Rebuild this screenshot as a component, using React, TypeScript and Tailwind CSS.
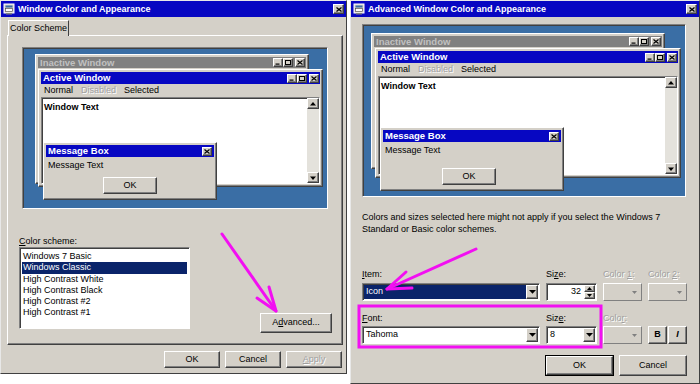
import React from 'react'

const raised = 'border border-t-white border-l-white border-b-[#404040] border-r-[#404040] shadow-[inset_-1px_-1px_#808080]'
const sunken = 'border border-t-[#808080] border-l-[#808080] border-b-white border-r-white shadow-[inset_1px_1px_#404040]'
const face = 'bg-[#d4d0c8]'
const titleBlue = 'bg-[#0707c2]'

function CapBtn({ kind }: { kind: 'min' | 'max' | 'close' }) {
  return (
    <div className={`w-[10px] h-[9px] ${face} ${raised} flex items-center justify-center`}>
      <svg width="6" height="5" viewBox="0 0 6 5">
        {kind === 'min' && <rect x="0.5" y="3.5" width="4" height="1.2" fill="#000" />}
        {kind === 'max' && <rect x="0.5" y="0.5" width="5" height="4" fill="none" stroke="#000" strokeWidth="1" />}
        {kind === 'close' && <path d="M0.5 0.5 L5.5 4.5 M5.5 0.5 L0.5 4.5" stroke="#000" strokeWidth="1.2" />}
      </svg>
    </div>
  )
}

function AppIcon() {
  return (
    <svg width="12" height="12" viewBox="0 0 12 12" className="shrink-0">
      <rect x="1" y="1" width="10" height="9" fill="#d4d0c8" stroke="#fff" />
      <rect x="2.5" y="2.5" width="7" height="2" fill="#3a6ea5" />
      <rect x="2.5" y="5.5" width="7" height="3" fill="#fff" stroke="#404040" strokeWidth="0.6" />
      <rect x="3" y="10" width="6" height="1.5" fill="#808080" />
    </svg>
  )
}

function TitleBar({ title }: { title: string }) {
  return (
    <div className={`h-[16px] ${titleBlue} flex items-center pl-[2px] pr-[2px] gap-[3px]`}>
      <AppIcon />
      <span className="text-white font-bold text-[9px] leading-none flex-1">{title}</span>
      <div className={`w-[11px] h-[10px] ${face} ${raised} flex items-center justify-center`}>
        <svg width="6" height="5" viewBox="0 0 6 5">
          <path d="M0.5 0.5 L5.5 4.5 M5.5 0.5 L0.5 4.5" stroke="#000" strokeWidth="1.3" />
        </svg>
      </div>
    </div>
  )
}

function Btn({ label, u, w, h, def, disabled }: { label: string; u?: number; w: number; h: number; def?: boolean; disabled?: boolean }) {
  const text = u === undefined ? label : (
    <>
      {label.slice(0, u)}
      <span className="underline">{label[u]}</span>
      {label.slice(u + 1)}
    </>
  )
  return (
    <div style={{ width: w, height: h }} className={`${def ? 'border border-black' : ''} ${face} shrink-0`}>
      <div className={`w-full h-full ${raised} flex items-center justify-center text-[9px] ${disabled ? 'text-[#a0a0a0] [text-shadow:1px_1px_#fff]' : 'text-black'}`}>
        {text}
      </div>
    </div>
  )
}

type PreviewProps = {
  w: number
  h: number
  inactive: { l: number; t: number; w: number; h: number }
  active: { l: number; t: number; w: number; h: number }
  msg: { l: number; t: number; w: number; h: number; okL: number; okT: number }
}

function Preview({ w, h, inactive, active, msg }: PreviewProps) {
  return (
    <div style={{ width: w, height: h }} className={`${sunken} bg-[#3a6ea5] relative shrink-0`}>
      {/* inactive window */}
      <div style={{ left: inactive.l, top: inactive.t, width: inactive.w, height: inactive.h }} className={`absolute ${face} ${raised} p-[2px]`}>
        <div className="h-[11px] bg-[#808080] flex items-center pl-[2px] pr-[1px]">
          <span className="flex-1 text-[9.5px] font-bold text-[#c0c0c0] leading-none">Inactive Window</span>
          <CapBtn kind="min" />
          <CapBtn kind="max" />
          <div className="w-[2px]" />
          <CapBtn kind="close" />
        </div>
      </div>
      {/* active window */}
      <div style={{ left: active.l, top: active.t, width: active.w, height: active.h }} className={`absolute ${face} ${raised} p-[2px] flex flex-col`}>
        <div className={`h-[12px] ${titleBlue} flex items-center pl-[2px] pr-[1px] shrink-0`}>
          <span className="flex-1 text-[9.5px] font-bold text-white leading-none">Active Window</span>
          <CapBtn kind="min" />
          <CapBtn kind="max" />
          <div className="w-[2px]" />
          <CapBtn kind="close" />
        </div>
        <div className="h-[13px] flex items-center gap-[8px] pl-[3px] text-[9px] shrink-0">
          <span>Normal</span>
          <span className="text-[#a0a0a0] [text-shadow:1px_1px_#fff]">Disabled</span>
          <span>Selected</span>
        </div>
        <div className={`flex-1 ${sunken} bg-white flex`}>
          <div className="flex-1 px-[2px] pt-[5px] text-[9px] font-bold leading-none">Window Text</div>
          <div className="w-[12px] bg-[#e4e2dc] flex flex-col justify-between">
            <div className={`h-[11px] ${face} ${raised} flex items-center justify-center`}>
              <svg width="6" height="4" viewBox="0 0 6 4"><path d="M3 0 L6 3.5 L0 3.5 Z" fill="#000" /></svg>
            </div>
            <div className={`h-[11px] ${face} ${raised} flex items-center justify-center`}>
              <svg width="6" height="4" viewBox="0 0 6 4"><path d="M0 0.5 L6 0.5 L3 4 Z" fill="#000" /></svg>
            </div>
          </div>
        </div>
      </div>
      {/* message box */}
      <div style={{ left: msg.l, top: msg.t, width: msg.w, height: msg.h }} className={`absolute ${face} ${raised} p-[2px]`}>
        <div className={`h-[12px] ${titleBlue} flex items-center pl-[2px] pr-[2px]`}>
          <span className="flex-1 text-[9.5px] font-bold text-white leading-none">Message Box</span>
          <CapBtn kind="close" />
        </div>
        <div className="pl-[2px] pt-[4px] text-[9px] leading-none">Message Text</div>
        <div className="absolute" style={{ left: msg.okL, top: msg.okT }}>
          <Btn label="OK" w={54} h={17} />
        </div>
      </div>
    </div>
  )
}

function Label({ text, u, gray }: { text: string; u?: number; gray?: boolean }) {
  return (
    <div className={`h-[12px] text-[9px] leading-[12px] ${gray ? 'text-[#a0a0a0] [text-shadow:1px_1px_#fff]' : 'text-black'}`}>
      {u === undefined ? text : (
        <>
          {text.slice(0, u)}
          <span className="underline">{text[u]}</span>
          {text.slice(u + 1)}
        </>
      )}
    </div>
  )
}

function DropArrow({ gray }: { gray?: boolean }) {
  return (
    <div className={`w-[12px] h-full ${face} ${raised} flex items-center justify-center shrink-0`}>
      <svg width="7" height="4" viewBox="0 0 7 4"><path d="M0 0 L7 0 L3.5 3.8 Z" fill={gray ? '#808080' : '#000'} /></svg>
    </div>
  )
}

function Combo({ w, value, selected }: { w: number; value: string; selected?: boolean }) {
  return (
    <div style={{ width: w }} className={`h-[18px] ${sunken} bg-white flex p-[1px] shrink-0`}>
      <div className={`flex-1 flex items-center pl-[2px] text-[9px] ${selected ? 'bg-[#0a246a] text-white' : 'text-black'}`}>{value}</div>
      <DropArrow />
    </div>
  )
}

function GrayCombo() {
  return (
    <div className={`w-[39px] h-[18px] ${face} border border-t-white border-l-white border-b-[#808080] border-r-[#808080] flex items-center justify-end pr-[4px]`}>
      <svg width="5" height="3" viewBox="0 0 5 3"><path d="M0 0 L5 0 L2.5 3 Z" fill="#808080" /></svg>
    </div>
  )
}

export default function App() {
  const schemes = ['Windows 7 Basic', 'Windows Classic', 'High Contrast White', 'High Contrast Black', 'High Contrast #2', 'High Contrast #1']

  return (
    <div className="relative w-[700px] h-[384px] bg-white flex gap-[3px] font-['Liberation_Sans',Arial,sans-serif] text-black overflow-hidden">
      {/* Left dialog */}
      <div className={`w-[347px] h-[374px] ${face} border border-t-[#e8e8e8] border-l-[#e8e8e8] border-b-[#404040] border-r-[#404040] flex flex-col shrink-0`}>
        <TitleBar title="Window Color and Appearance" />
        <div className="pl-[7px] pt-[3px] flex">
          <div className={`h-[16px] w-[61px] border-t border-l border-t-white border-l-white border-r border-r-[#404040] ${face} text-[9px] flex items-center justify-center relative z-10 -mb-[1px]`}>
            Color Scheme
          </div>
        </div>
        <div className={`ml-[6px] w-[336px] h-[310px] ${raised} px-[14px] pt-[11px] flex flex-col`}>
          <Preview
            w={306}
            h={162}
            inactive={{ l: 12, t: 6, w: 274, h: 130 }}
            active={{ l: 15, t: 21, w: 285, h: 118 }}
            msg={{ l: 20, t: 94, w: 174, h: 58, okL: 59, okT: 34 }}
          />
          <div className="mt-[26px] flex justify-between items-end">
            <div className="-ml-[3px] flex flex-col">
              <Label text="Color scheme:" u={0} />
              <div className={`w-[171px] h-[82px] ${sunken} bg-white p-[2px] pt-[3px]`}>
                {schemes.map((s, i) => (
                  <div key={s} className={`h-[11.3px] leading-[11.3px] text-[9px] pl-[1px] ${i === 1 ? 'bg-[#0a246a] text-white' : ''}`}>{s}</div>
                ))}
              </div>
            </div>
            <div className="mb-[-4px] mr-[-4px]">
              <Btn label="Advanced..." u={1} w={72} h={20} />
            </div>
          </div>
        </div>
        <div className="mt-[6px] pr-[4px] flex justify-end gap-[5px]">
          <Btn label="OK" w={56} h={17} />
          <Btn label="Cancel" w={56} h={17} />
          <Btn label="Apply" u={0} w={56} h={17} disabled />
        </div>
      </div>

      {/* Right dialog */}
      <div className={`w-[350px] h-[384px] ${face} border border-t-[#e8e8e8] border-l-[#e8e8e8] border-b-[#404040] border-r-[#404040] flex flex-col shrink-0`}>
        <TitleBar title="Advanced Window Color and Appearance" />
        <div className="pl-[11px] pt-[7px]">
          <Preview
            w={324}
            h={173}
            inactive={{ l: 8, t: 8, w: 294, h: 136 }}
            active={{ l: 12, t: 23, w: 306, h: 130 }}
            msg={{ l: 17, t: 102, w: 184, h: 64, okL: 61, okT: 40 }}
          />
        </div>
        <div className="pl-[11px] pt-[14px] text-[9px] leading-[12px] w-[330px]">
          Colors and sizes selected here might not apply if you select the Windows 7 Standard or Basic color schemes.
        </div>
        <div className="pl-[11px] pt-[33px] flex flex-col">
          <div className="flex gap-[6px]">
            <div className="w-[178px] flex flex-col gap-[3px]">
              <Label text="Item:" u={0} />
              <Combo w={178} value="Icon" selected />
            </div>
            <div className="w-[51px] flex flex-col gap-[3px]">
              <Label text="Size:" u={2} />
              <div className={`h-[18px] w-[51px] ${sunken} bg-white flex p-[1px]`}>
                <div className="flex-1 text-[9px] flex items-center justify-end pr-[3px]">32</div>
                <div className="w-[11px] flex flex-col">
                  <div className={`flex-1 ${face} ${raised} flex items-center justify-center`}>
                    <svg width="5" height="3" viewBox="0 0 5 3"><path d="M2.5 0 L5 3 L0 3 Z" fill="#000" /></svg>
                  </div>
                  <div className={`flex-1 ${face} ${raised} flex items-center justify-center`}>
                    <svg width="5" height="3" viewBox="0 0 5 3"><path d="M0 0 L5 0 L2.5 3 Z" fill="#000" /></svg>
                  </div>
                </div>
              </div>
            </div>
            <div className="w-[39px] flex flex-col gap-[3px]">
              <Label text="Color 1:" u={6} gray />
              <GrayCombo />
            </div>
            <div className="w-[39px] flex flex-col gap-[3px]">
              <Label text="Color 2:" u={6} gray />
              <GrayCombo />
            </div>
          </div>
          <div className="flex gap-[6px] mt-[11px]">
            <div className="w-[178px] flex flex-col gap-[2px]">
              <Label text="Font:" u={0} />
              <Combo w={178} value="Tahoma" />
            </div>
            <div className="w-[51px] flex flex-col gap-[2px]">
              <Label text="Size:" u={3} />
              <Combo w={51} value="8" />
            </div>
            <div className="w-[39px] flex flex-col gap-[2px]">
              <Label text="Color:" u={4} gray />
              <GrayCombo />
            </div>
            <div className="w-[39px] flex flex-col gap-[2px]">
              <div className="h-[12px]" />
              <div className="flex gap-[1px]">
                <div className={`w-[19px] h-[18px] ${face} ${raised} flex items-center justify-center text-[9px] font-bold`}>B</div>
                <div className={`w-[19px] h-[18px] ${face} ${raised} flex items-center justify-center text-[9px] italic font-bold`}>I</div>
              </div>
            </div>
          </div>
          <div className="flex justify-end gap-[5px] mt-[11px] pr-[12px]">
            <Btn label="OK" w={69} h={21} def />
            <Btn label="Cancel" w={68} h={21} />
          </div>
        </div>
      </div>

      {/* magenta annotations */}
      <svg className="absolute inset-0 pointer-events-none" width="700" height="384" viewBox="0 0 700 384">
        <g stroke="#f20ff2" strokeWidth="3" strokeLinecap="round" fill="none">
          <path d="M222 234 L276 311" />
          <path d="M276 311 L257 298 M276 311 L269 287" />
          <path d="M476 249 L387 289" />
          <path d="M387 289 L406 272 M387 289 L412 288" />
          <rect x="359" y="306" width="242" height="41" />
        </g>
      </svg>
    </div>
  )
}
